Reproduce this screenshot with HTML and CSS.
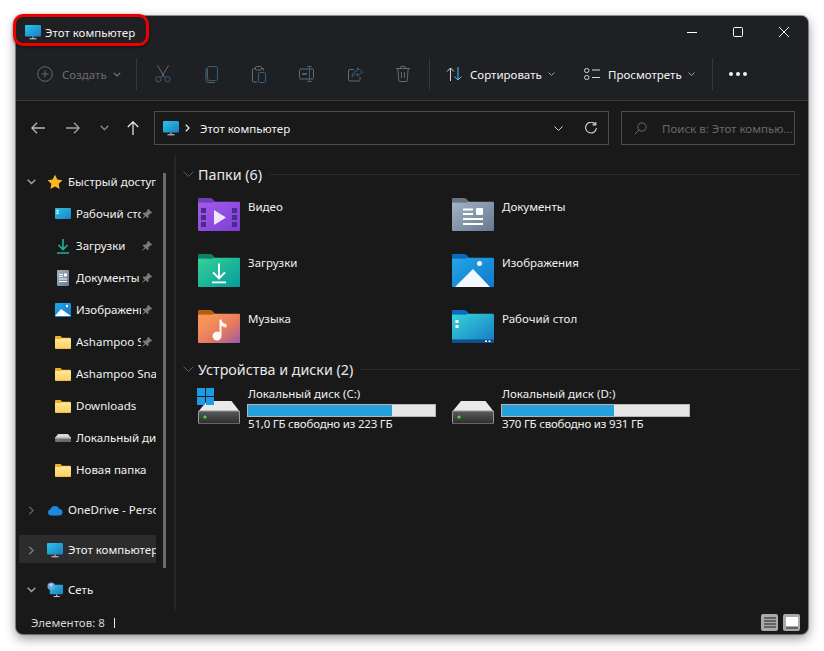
FILE: index.html
```html
<!DOCTYPE html>
<html lang="ru">
<head>
<meta charset="utf-8">
<title>Этот компьютер</title>
<link rel="stylesheet" href="styles.css">
</head>
<body>
<svg class="defs" aria-hidden="true">
  <defs>
    <linearGradient id="gMon" x1="0" y1="0" x2="1" y2="1"><stop offset="0" stop-color="#2bc3e8"/><stop offset="1" stop-color="#1a7fc4"/></linearGradient>
    <linearGradient id="gYel" x1="0" y1="0" x2="0" y2="1"><stop offset="0" stop-color="#ffe79a"/><stop offset="1" stop-color="#fcd05f"/></linearGradient>
    <linearGradient id="gPur" x1="0" y1="0" x2="1" y2="1"><stop offset="0" stop-color="#a45be8"/><stop offset="1" stop-color="#7c3fd6"/></linearGradient>
    <linearGradient id="gGrn" x1="0" y1="0" x2="1" y2="1"><stop offset="0" stop-color="#35d392"/><stop offset="1" stop-color="#069a9f"/></linearGradient>
    <linearGradient id="gOrg" x1="0" y1="0" x2="1" y2="1"><stop offset="0.2" stop-color="#f79459"/><stop offset="0.6" stop-color="#e5795f"/><stop offset="1" stop-color="#9a5bab"/></linearGradient>
    <linearGradient id="gDoc" x1="0" y1="0" x2="1" y2="1"><stop offset="0" stop-color="#a4b4c6"/><stop offset="1" stop-color="#64788f"/></linearGradient>
    <linearGradient id="gImg" x1="0" y1="0" x2="1" y2="1"><stop offset="0" stop-color="#25a6e6"/><stop offset="1" stop-color="#0f78d0"/></linearGradient>
    <linearGradient id="gDsk" x1="0" y1="0" x2="1" y2="1"><stop offset="0" stop-color="#35d6d6"/><stop offset="1" stop-color="#1678c8"/></linearGradient>
    <linearGradient id="gDrv" x1="0" y1="0" x2="0" y2="1"><stop offset="0" stop-color="#5a5a5a"/><stop offset="1" stop-color="#2c2c2c"/></linearGradient>

    <symbol id="monitor" viewBox="0 0 16 15">
      <rect x="0" y="0" width="16" height="11.5" rx="1" fill="url(#gMon)"/>
      <path d="M7.3 11.5h1.4v2H7.3z" fill="#9aa5ad"/><path d="M4.5 13.3h7v1h-7z" fill="#d5d9dc"/>
    </symbol>
    <symbol id="folder" viewBox="0 0 16 13">
      <path d="M0 1a1 1 0 011-1h4.5l1.5 1.7h8a1 1 0 011 1V12a1 1 0 01-1 1H1a1 1 0 01-1-1z" fill="#f2ac27"/>
      <path d="M0 3.8a.8.8 0 01.8-.8H6l1-.7h8a1 1 0 011 1V11.6a1 1 0 01-1 1H1a1 1 0 01-1-1z" fill="url(#gYel)"/>
    </symbol>
    <symbol id="pin" viewBox="0 0 12 12">
      <path d="M7.2.8l4 4-1 .8-.7-.3-2.2 2.2.2 1.9-.9.9-2-2L1.3 11 1 10.7l2.6-3.3-2-2 .9-.9 1.9.2 2.2-2.2-.3-.7z" fill="#77787a"/>
    </symbol>
    <symbol id="drive-small" viewBox="0 0 16 10" preserveAspectRatio="none">
      <path d="M3 0h10l3 5H0z" fill="#d8d8d8"/><rect x="0" y="4.5" width="16" height="5.5" rx="1" fill="#6a6a6a"/><rect x="0" y="4.5" width="16" height="1" fill="#e6e6e6"/>
      <rect x="2.5" y="6.8" width="1.6" height="1.4" fill="#3fdc5a"/>
    </symbol>
    <symbol id="drive" viewBox="0 0 42 23">
      <path d="M9 0h24.5L42 11H0z" fill="#e9e9e9"/>
      <rect x="0.5" y="10" width="41" height="13" rx="1.5" fill="url(#gDrv)" stroke="#9a9a9a"/>
      <circle cx="7" cy="16" r="1.6" fill="#39e04a"/>
    </symbol>
  </defs>
</svg>

<div class="window">
  <header class="titlebar">
    <svg class="ico16"><use href="#monitor"/></svg>
    <span class="title-text">Этот компьютер</span>
    <div class="wincontrols">
      <button class="winbtn"><svg width="10" height="10" viewBox="0 0 10 10"><path d="M0 5.5h10" stroke="#fff" fill="none"/></svg></button>
      <button class="winbtn"><svg width="10" height="10" viewBox="0 0 10 10"><rect x=".5" y=".5" width="9" height="9" rx="1" stroke="#fff" fill="none"/></svg></button>
      <button class="winbtn"><svg width="10" height="10" viewBox="0 0 10 10"><path d="M0 0l10 10M10 0L0 10" stroke="#fff" fill="none"/></svg></button>
    </div>
  </header>

  <div class="toolbar">
    <div class="tool-new">
      <svg width="16" height="16" viewBox="0 0 16 16" fill="none" stroke="#66696c"><circle cx="8" cy="8" r="7.3"/><path d="M8 4.5v7M4.5 8h7"/></svg>
      <span class="dim">Создать</span>
      <svg class="chev" width="8" height="5" viewBox="0 0 8 5" fill="none" stroke="#77797b" stroke-width="1.2"><path d="M.8.800L4 4l3.200-3.200"/></svg>
    </div>
    <i class="tsep"></i>
    <div class="tool-icons">
      <button class="tbtn"><svg width="16" height="18" viewBox="0 0 16 18" fill="none" stroke="#36607e"><circle cx="3.400" cy="14.300" r="2.600"/><circle cx="12.600" cy="14.300" r="2.600"/></svg><svg class="overlay-scissors" width="16" height="18" viewBox="0 0 16 18" fill="none" stroke="#686b6e"><path d="M2.500 .5l7.200 11.800M13.500 .5L6.300 12.300"/></svg></button>
      <button class="tbtn"><svg width="14" height="17" viewBox="0 0 14 17" fill="none"><path d="M2 2.500v11a3 3 0 003 3h6" stroke="#5f6265"/><rect x="3.500" y=".5" width="10" height="14" rx="2" stroke="#36607e"/></svg></button>
      <button class="tbtn"><svg width="14" height="17" viewBox="0 0 14 17" fill="none"><path d="M9 2.500h2.500v2M4 2.500H1.500a1 1 0 00-1 1V15a1 1 0 001 1H5" stroke="#686b6e"/><rect x="3.500" y=".5" width="6" height="3.500" rx="1" stroke="#686b6e"/><rect x="6.500" y="6.500" width="7" height="10" rx="1" stroke="#36607e"/></svg></button>
      <button class="tbtn"><svg width="16" height="16" viewBox="0 0 16 16" fill="none"><rect x=".5" y="3" width="14" height="10" rx="1.500" stroke="#686b6e"/><path d="M3 8h5" stroke="#686b6e" stroke-width="1.500"/><path d="M8 .5h5M8 15.500h5M10.500 .5v15" stroke="#36607e"/></svg></button>
      <button class="tbtn"><svg width="15" height="15" viewBox="0 0 15 15" fill="none"><path d="M6 2.500H2a1.500 1.500 0 00-1.500 1.500v8.500A1.500 1.500 0 002 14h8.500a1.500 1.500 0 001.500-1.500V10" stroke="#686b6e"/><path d="M9.500 .8l5 4.200-5 4.200V6.800C7 6.800 5 7.800 4 10c0-3.500 2-6 5.500-6.500z" stroke="#36607e"/></svg></button>
      <button class="tbtn"><svg width="14" height="16" viewBox="0 0 14 16" fill="none" stroke="#686b6e"><path d="M0 2.500h14M4.500 2.500V1.200a.7.700 0 01.7-.7h3.600a.7.700 0 01.7.7v1.300M1.800 2.500l1 12a1 1 0 001 1h6.400a1 1 0 001-1l1-12M5.500 6v6M8.500 6v6"/></svg></button>
    </div>
    <i class="tsep sep2"></i>
    <div class="tool-sort">
      <svg width="16" height="14" viewBox="0 0 16 14" fill="none"><path d="M1 4.500L4.500 1 8 4.500M4.500 1v13" stroke="#d6d6d6"/><path d="M8.500 9.500L12 13l3.500-3.500M12 0v13" stroke="#4fc1f0"/></svg>
      <span class="tlabel">Сортировать</span>
      <svg class="chev" width="7" height="4" viewBox="0 0 7 4" fill="none" stroke="#9d9d9d"><path d="M.5.500L3.500 3.500 6.500.500"/></svg>
    </div>
    <div class="tool-view">
      <svg width="16" height="12" viewBox="0 0 16 12" fill="none" stroke="#d6d6d6"><rect x=".5" y=".5" width="4.500" height="4" rx="2"/><rect x=".5" y="7.500" width="4.500" height="4" rx="2"/><path d="M8 2h8M8 9.500h8"/></svg>
      <span class="tlabel">Просмотреть</span>
      <svg class="chev" width="7" height="4" viewBox="0 0 7 4" fill="none" stroke="#9d9d9d"><path d="M.5.500L3.500 3.500 6.500.500"/></svg>
    </div>
    <i class="tsep sep3"></i>
    <div class="tool-more"><i></i><i></i><i></i></div>
  </div>

  <nav class="navbar">
    <div class="navbtns">
      <svg width="14" height="12" viewBox="0 0 14 12" fill="none" stroke="#b9b9b9" stroke-width="1.300"><path d="M6 .8L.9 6 6 11.200M1 6h13"/></svg>
      <svg class="nb-fwd" width="14" height="12" viewBox="0 0 14 12" fill="none" stroke="#a4a4a4" stroke-width="1.300"><path d="M8 .8L13.100 6 8 11.200M13 6H0"/></svg>
      <svg class="nb-down" width="9" height="6" viewBox="0 0 9 6" fill="none" stroke="#8f8f8f" stroke-width="1.300"><path d="M.7.800L4.500 4.600 8.300.800"/></svg>
      <svg class="nb-up" width="12" height="14" viewBox="0 0 12 14" fill="none" stroke="#f0f0f0" stroke-width="1.200"><path d="M.8 6L6 .8 11.200 6M6 1v13"/></svg>
    </div>
    <div class="address">
      <svg class="ico16"><use href="#monitor"/></svg>
      <svg class="addr-chev" width="5" height="8" viewBox="0 0 5 8" fill="none" stroke="#e8e8e8" stroke-width="1.300"><path d="M.8.800L4 4 .8 7.200"/></svg>
      <span class="addr-text">Этот компьютер</span>
      <svg class="addr-drop" width="9" height="5" viewBox="0 0 9 5" fill="none" stroke="#d0d0d0"><path d="M.5.500l4 4 4-4"/></svg>
      <svg class="addr-ref" width="12" height="12" viewBox="0 0 12 12" fill="none" stroke="#d8d8d8" stroke-width="1.100"><path d="M10.600 2.700A5.400 5.400 0 1011.400 6"/><path d="M7.500 2.900h3.300V0" /></svg>
    </div>
    <div class="search">
      <svg width="13" height="13" viewBox="0 0 13 13" fill="none" stroke="#6f6a5f"><circle cx="8" cy="5" r="4.200"/><path d="M5 8L.7 12.300"/></svg>
      <span class="search-text">Поиск в: Этот компью...</span>
    </div>
  </nav>

  <div class="body">
    <aside class="sidebar">
      <div class="tree">
        <div class="row top32">
          <svg class="tw" width="9" height="6" viewBox="0 0 9 6" fill="none" stroke="#a5a5a5" stroke-width="1.400"><path d="M.7.800L4.500 4.600 8.300.800"/></svg>
          <svg class="ico" width="16" height="16" viewBox="0 0 16 16"><path d="M8 .8l2.300 4.700 5.200.7-3.800 3.600.9 5.200L8 12.500 3.400 15l.9-5.200L.5 6.200l5.200-.7z" fill="#f6b91f"/></svg>
          <span class="lbl">Быстрый доступ</span>
        </div>
        <div class="row child pinned">
          <svg class="ico" width="16" height="12" viewBox="0 0 16 12"><rect width="16" height="11" rx="1" fill="url(#gMon)"/><path d="M1.500 2h2v1.500h-2zM1.500 4.500h2V6h-2z" fill="#fff"/></svg>
          <span class="lbl">Рабочий стол</span>
          <svg class="pin"><use href="#pin"/></svg>
        </div>
        <div class="row child pinned">
          <svg class="ico" width="16" height="16" viewBox="0 0 16 16" fill="none" stroke="#1fb49a" stroke-width="1.600"><path d="M8 1v10M3.500 7L8 11.500 12.500 7M2 15h12"/></svg>
          <span class="lbl">Загрузки</span>
          <svg class="pin"><use href="#pin"/></svg>
        </div>
        <div class="row child pinned">
          <svg class="ico" width="16" height="16" viewBox="0 0 16 16"><rect x="2" width="12" height="16" rx="1" fill="url(#gDoc)"/><path d="M4 4h4v1H4zM4 6h4v1H4zM4 8.500h8v1H4zM4 11h8v1H4zM9 3.500h3v3H9z" fill="#fff"/></svg>
          <span class="lbl">Документы</span>
          <svg class="pin"><use href="#pin"/></svg>
        </div>
        <div class="row child pinned">
          <svg class="ico" width="16" height="14" viewBox="0 0 16 14"><rect width="16" height="14" rx="1" fill="url(#gImg)"/><path d="M0 13l6-7 10 7z" fill="#fff"/><circle cx="12" cy="3" r="1.200" fill="#fff"/></svg>
          <span class="lbl">Изображения</span>
          <svg class="pin"><use href="#pin"/></svg>
        </div>
        <div class="row child pinned">
          <svg class="ico" width="16" height="13"><use href="#folder"/></svg>
          <span class="lbl">Ashampoo Snap</span>
          <svg class="pin"><use href="#pin"/></svg>
        </div>
        <div class="row child">
          <svg class="ico" width="16" height="13"><use href="#folder"/></svg>
          <span class="lbl">Ashampoo Snap 11</span>
        </div>
        <div class="row child">
          <svg class="ico" width="16" height="13"><use href="#folder"/></svg>
          <span class="lbl">Downloads</span>
        </div>
        <div class="row child">
          <svg class="ico" width="16" height="8"><use href="#drive-small"/></svg>
          <span class="lbl">Локальный диск (C:)</span>
        </div>
        <div class="row child">
          <svg class="ico" width="16" height="13"><use href="#folder"/></svg>
          <span class="lbl">Новая папка</span>
        </div>
        <div class="row top first">
          <svg class="tw" width="6" height="9" viewBox="0 0 6 9" fill="none" stroke="#5f5f5f" stroke-width="1.400"><path d="M.8.700L4.600 4.500.8 8.300"/></svg>
          <svg class="ico" width="16" height="11" viewBox="0 0 16 11"><path d="M4 10.500a3.200 3.200 0 01-.6-6.300A4.800 4.800 0 0112.400 4 3.300 3.300 0 0113 10.500z" fill="#1e88dc"/></svg>
          <span class="lbl">OneDrive - Personal</span>
        </div>
        <div class="row top sel">
          <svg class="tw" width="6" height="9" viewBox="0 0 6 9" fill="none" stroke="#7a7a7a" stroke-width="1.400"><path d="M.8.700L4.600 4.500.8 8.300"/></svg>
          <svg class="ico" width="16" height="15"><use href="#monitor"/></svg>
          <span class="lbl">Этот компьютер</span>
        </div>
        <div class="row top">
          <svg class="tw" width="9" height="6" viewBox="0 0 9 6" fill="none" stroke="#a5a5a5" stroke-width="1.400"><path d="M.7.800L4.500 4.600 8.300.800"/></svg>
          <svg class="ico" width="16" height="16" viewBox="0 0 17 17"><rect x="3" y="3" width="14" height="10" rx="1" fill="url(#gMon)"/><path d="M9.500 13h1.500v2H9.500z" fill="#9aa5ad"/><path d="M7 15h6.500v1H7z" fill="#d5d9dc"/><circle cx="4.500" cy="4.500" r="4" fill="#6aa8d8"/><path d="M2 3a4 4 0 014-1l-1 3z" fill="#bfe0f0"/></svg>
          <span class="lbl">Сеть</span>
        </div>
      </div>
      <div class="scrollbar"></div>
    </aside>

    <main class="content">
      <div class="grouphead">
        <svg width="11" height="6" viewBox="0 0 11 6" fill="none" stroke="#5c5c5c"><path d="M.5.500l5 5 5-5"/></svg>
        <h2>Папки (6)</h2><i></i>
      </div>
      <div class="tiles">
        <div class="tile">
          <svg class="bigico" viewBox="0 0 42 33"><path d="M1 0h11q2 0 3.500 2L17 4v10H0V1a1 1 0 011-1z" fill="#6f3fb5"/><path d="M0 5.500a1 1 0 011-1l13 .2 2-1h25a1 1 0 011 1V32a1 1 0 01-1 1H1a1 1 0 01-1-1z" fill="url(#gPur)"/><path d="M3 10h5v5H3zM3 17h5v5H3zM3 24h5v5H3zM34 10h5v5h-5zM34 17h5v5h-5zM34 24h5v5h-5z" fill="#4e2a8c"/><path d="M16 12l12 7.500L16 27z" fill="#eee6f8"/></svg>
          <span class="tname">Видео</span>
        </div>
        <div class="tile">
          <svg class="bigico" viewBox="0 0 42 33"><path d="M1 0h11q2 0 3.500 2L17 4v10H0V1a1 1 0 011-1z" fill="#8193a6" opacity=".75"/><path d="M0 5.500a1 1 0 011-1l13 .2 2-1h25a1 1 0 011 1V32a1 1 0 01-1 1H1a1 1 0 01-1-1z" fill="url(#gDoc)"/><path d="M11 10.500h10v2H11zM11 15h10v2H11zM11 20h20v2H11zM11 25h20v2H11z" fill="#fff"/><rect x="24" y="10" width="7" height="7" rx="1" fill="#fff"/></svg>
          <span class="tname">Документы</span>
        </div>
        <div class="tile">
          <svg class="bigico" viewBox="0 0 42 33"><path d="M1 0h11q2 0 3.500 2L17 4v10H0V1a1 1 0 011-1z" fill="#0c7f68"/><path d="M0 5.500a1 1 0 011-1l13 .2 2-1h25a1 1 0 011 1V32a1 1 0 01-1 1H1a1 1 0 01-1-1z" fill="url(#gGrn)"/><path d="M20 9.500h2v12.500l4.300-4.300 1.400 1.400-6.700 6.700-6.700-6.700 1.400-1.400 4.300 4.300zM14 27.500h14v1.800H14z" fill="#fff"/></svg>
          <span class="tname">Загрузки</span>
        </div>
        <div class="tile">
          <svg class="bigico" viewBox="0 0 42 33"><path d="M1 0h11q2 0 3.500 2L17 4v10H0V1a1 1 0 011-1z" fill="#0a69c0"/><path d="M0 5.500a1 1 0 011-1l13 .2 2-1h25a1 1 0 011 1V32a1 1 0 01-1 1H1a1 1 0 01-1-1z" fill="url(#gImg)"/><path d="M3 33l18-18 17 18z" fill="#f4f8fc"/><circle cx="27.500" cy="9.500" r="2.500" fill="#f4f8fc"/></svg>
          <span class="tname">Изображения</span>
        </div>
        <div class="tile">
          <svg class="bigico" viewBox="0 0 42 33"><path d="M1 0h11q2 0 3.500 2L17 4v10H0V1a1 1 0 011-1z" fill="#b85c10"/><path d="M0 5.500a1 1 0 011-1l13 .2 2-1h25a1 1 0 011 1V32a1 1 0 01-1 1H1a1 1 0 01-1-1z" fill="url(#gOrg)"/><path d="M22 9.500h1.500c.5 3 2 4 5 4.500v3.500c-2 0-4-.7-5-2V26a4.500 4.500 0 11-2-3.700V10z" fill="#fbf8f6"/></svg>
          <span class="tname">Музыка</span>
        </div>
        <div class="tile">
          <svg class="bigico" viewBox="0 0 42 33"><path d="M1 0h11q2 0 3.500 2L17 4v10H0V1a1 1 0 011-1z" fill="#0a69c0"/><path d="M0 5.500a1 1 0 011-1l13 .2 2-1h25a1 1 0 011 1V32a1 1 0 01-1 1H1a1 1 0 01-1-1z" fill="url(#gDsk)"/><path d="M0 29.500h42V32a1 1 0 01-1 1H1a1 1 0 01-1-1z" fill="#0f4f8f"/><path d="M3.500 10h3v3h-3zM3.500 15h3v3h-3zM33 30.500h2v1.500h-2zM36.500 30.500h2v1.500h-2z" fill="#fff"/></svg>
          <span class="tname">Рабочий стол</span>
        </div>
      </div>

      <div class="grouphead second">
        <svg width="11" height="6" viewBox="0 0 11 6" fill="none" stroke="#5c5c5c"><path d="M.5.500l5 5 5-5"/></svg>
        <h2>Устройства и диски (2)</h2><i></i>
      </div>
      <div class="drives">
        <div class="drivetile">
          <div class="driveico">
            <svg class="winlogo" width="17" height="17" viewBox="0 0 17 17" fill="#1e9be6"><path d="M0 0h8v8H0zM9 0h8v8H9zM0 9h8v8H0zM9 9h8v8H9z"/></svg>
            <svg class="drv" width="42" height="23"><use href="#drive"/></svg>
          </div>
          <div class="driveinfo">
            <span class="tname">Локальный диск (C:)</span>
            <div class="bar"><div class="fill fill-c"></div></div>
            <span class="tname dfree">51,0 ГБ свободно из 223 ГБ</span>
          </div>
        </div>
        <div class="drivetile">
          <div class="driveico">
            <svg class="drv" width="42" height="23"><use href="#drive"/></svg>
          </div>
          <div class="driveinfo">
            <span class="tname">Локальный диск (D:)</span>
            <div class="bar"><div class="fill fill-d"></div></div>
            <span class="tname dfree">370 ГБ свободно из 931 ГБ</span>
          </div>
        </div>
      </div>
    </main>
  </div>

  <footer class="status">
    <span>Элементов: 8</span><i class="caret"></i>
    <div class="views">
      <div class="viewbtn"><svg width="12" height="11" viewBox="0 0 12 11" stroke="#1c1c1c" fill="none"><path d="M0 1h12M0 4h12M0 7h12M0 10h12"/></svg></div>
      <div class="viewbtn"><svg width="12" height="12" viewBox="0 0 12 12"><rect width="12" height="9" fill="#fff"/><rect y="10.500" width="12" height="1" fill="#222"/></svg></div>
    </div>
  </footer>

  <div class="annot"></div>
</div>
</body>
</html>
```

FILE: styles.css
```css
* { box-sizing: border-box; }
html, body { margin: 0; height: 100%; }
body {
  background: #fff;
  padding: 16px;
  font-family: "Noto Sans", "Open Sans", sans-serif;
  font-size: 11.5px;
  color: #f2f2f2;
  overflow: hidden;
}
.defs { display: block; width: 0; height: 0; }
svg { flex: none; display: block; }
button { background: none; border: 0; padding: 0; margin: 0; }
i { font-style: normal; display: block; }

.window {
  position: relative;
  width: 792px;
  height: 618px;
  display: flex;
  flex-direction: column;
  background: #191919;
  border-radius: 7px;
  box-shadow: 0 4px 12px rgba(0,0,0,.45), 0 0 0 1px rgba(70,74,80,.55);
}

.titlebar {
  height: 32px;
  flex: none;
  display: flex;
  align-items: center;
  padding-left: 9px;
  background: #1f2023;
  border-radius: 7px 7px 0 0;
}
.ico16 { width: 16px; height: 15px; }
.title-text { margin-left: 4px; }
.wincontrols { margin-left: auto; margin-right: 1px; display: flex; }
.winbtn { width: 46px; height: 32px; display: flex; align-items: center; justify-content: center; }

.toolbar {
  height: 53px;
  flex: none;
  display: flex;
  align-items: center;
  background: #1f2023;
  border-bottom: 1px solid #3a3b3d;
}
.tool-new { display: flex; align-items: center; margin-left: 21px; width: 99px; }
.dim { color: #6a6c6f; margin-left: 9px; }
.chev { margin-left: 6px; }
.tsep { width: 1px; height: 32px; background: #35363a; }
.tool-icons { display: flex; margin-left: 2px; }
.tbtn { position: relative; width: 48px; height: 32px; display: flex; align-items: center; justify-content: center; }
.overlay-scissors { position: absolute; left: 16px; top: 7px; }
.sep2 { margin-left: 2px; }
.tool-sort { display: flex; align-items: center; margin-left: 16px; width: 138px; }
.tool-view { display: flex; align-items: center; width: 128px; }
.tool-sort .tlabel, .tool-view .tlabel { margin-left: 8px; color: #f4f4f4; }
.sep3 { margin-left: 0; }
.tool-more { display: flex; gap: 3px; margin-left: 16px; }
.tool-more i { width: 4px; height: 4px; border-radius: 50%; background: #f0f0f0; }

.navbar {
  height: 54px;
  flex: none;
  display: flex;
  align-items: center;
  background: #191919;
}
.navbtns { display: flex; align-items: center; width: 138px; padding-left: 15px; }
.nb-fwd { margin-left: 21px; }
.nb-down { margin-left: 20px; }
.nb-up { margin-left: 18px; }
.address {
  width: 455px;
  height: 34px;
  border: 1px solid #4c4c4c;
  display: flex;
  align-items: center;
  padding-left: 8px;
}
.addr-chev { margin-left: 6px; }
.addr-text { margin-left: 10px; }
.addr-drop { margin-left: auto; }
.addr-ref { margin: 0 11px 0 22px; }
.search {
  width: 174px;
  height: 34px;
  margin-left: 12px;
  border: 1px solid #4c4c4c;
  display: flex;
  align-items: center;
  padding-left: 12px;
  color: #67696c;
  white-space: nowrap;
  overflow: hidden;
}
.search-text { margin-left: 15px; }

.body { flex: 1; min-height: 0; display: flex; }
.sidebar {
  width: 160px;
  flex: none;
  display: flex;
  padding-top: 10px;
  border-right: 2px solid #262626;
}
.tree { width: 140px; flex: none; overflow: hidden; }
.row { display: flex; align-items: center; height: 32px; white-space: nowrap; overflow: hidden; }
.row svg { margin-top: 2px; }
.lbl { overflow: hidden; white-space: nowrap; flex: 1; min-width: 0; }
.top32 { padding-left: 11px; }
.tw { width: 9px; }
.top32 .ico, .top .ico { margin-left: 11px; margin-right: 5px; }
.child { padding-left: 39px; }
.child .ico { margin-right: 5px; }
.pinned { padding-right: 1px; }
.pin { width: 12px; height: 12px; flex: none; margin-left: 0; margin-right: 2px; }
.top { height: 28px; margin-top: 12px; padding-left: 11px; }
.top.first { margin-top: 10px; }
.sel { background: #2c2c2c; margin-left: 3px; padding-left: 8px; }
.scrollbar {
  width: 3px;
  height: 395px;
  margin: 8px 0 0 7px;
  background: #6b6b6b;
}

.content { flex: 1; min-width: 0; padding: 8px 7px 0 7px; }
.grouphead { display: flex; align-items: center; height: 22px; gap: 4px; }
.grouphead h2 { margin: 0; font-size: 14.3px; font-weight: 400; color: #e9e9e9; white-space: nowrap; }
.grouphead i { flex: 1; height: 1px; background: #2c2c2c; margin-left: 3px; }
.second { margin-top: 15px; }
.tiles { display: grid; grid-template-columns: 254px 254px; grid-template-rows: 56px 56px 33px; margin: 13px 0 0 15px; }
.tile { display: flex; gap: 8px; align-items: flex-start; }
.bigico { width: 42px; height: 33px; }
.tname { display: block; line-height: 18px; color: #f0f0f0; white-space: nowrap; }
.driveinfo .tname { padding-left: 1px; }
.dfree { letter-spacing: -.2px; }
.drives { display: flex; margin: 5px 0 0 14px; }
.drivetile { width: 254px; display: flex; gap: 7px; }
.driveico { position: relative; width: 43px; height: 39px; display: flex; flex-direction: column; justify-content: flex-end; padding-left: 1px; }
.winlogo { position: absolute; left: 0; top: 3px; }
.driveinfo { width: 189px; }
.bar { height: 13px; background: #e6e6e6; border: 1px solid #b5b5b5; margin: 1px 0 -2px 0; }
.fill { height: 100%; background: #26a0da; }
.fill-c { width: 77%; }
.fill-d { width: 60%; }

.status { height: 23px; flex: none; display: flex; align-items: center; padding-left: 15px; color: #d6d6d6; }
.caret { width: 1px; height: 10px; background: #e8e8e8; margin-left: 9px; }
.views { margin-left: auto; margin-right: 8px; display: flex; gap: 5px; }
.viewbtn { width: 17px; height: 17px; background: #a9a9a9; border-radius: 2px; display: flex; align-items: center; justify-content: center; }

.annot {
  position: absolute;
  left: -3px;
  top: -2px;
  width: 136px;
  height: 32px;
  border: 3px solid #ee0000;
  border-radius: 10px;
  box-shadow: 0 1px 3px rgba(0,0,0,.5);
}
```
